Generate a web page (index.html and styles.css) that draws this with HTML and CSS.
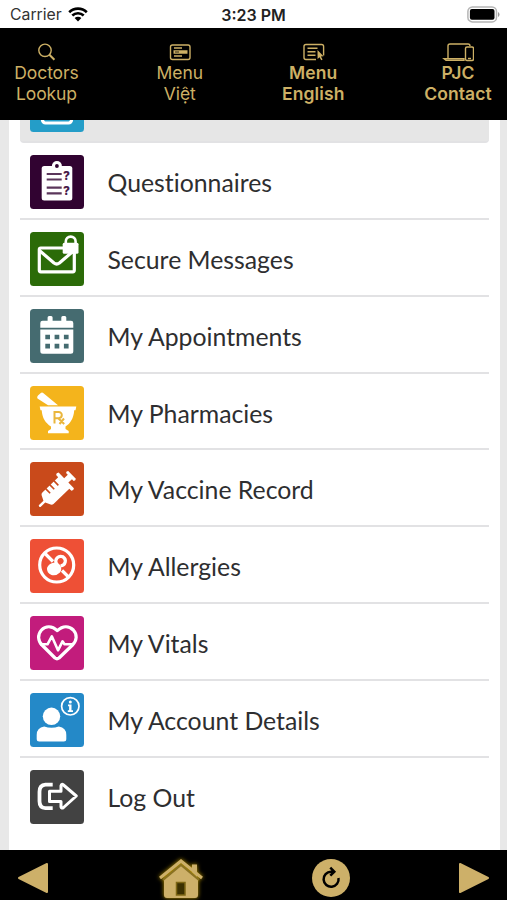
FILE: index.html
```
<!DOCTYPE html>
<html lang="en">
<head>
	<meta charset="UTF-8">
	<title>Patient Portal</title>
	<link rel="stylesheet" href="styles.css">
</head>
<body>
	<div id="app">
		<div class="status">
			<div class="carrier">
				<span>Carrier</span>
				<svg width="20" height="15" viewBox="0 0 20 15">
					<path d="M1.2 5.2a12.6 12.6 0 0 1 17.6 0M4.3 8.5a8.2 8.2 0 0 1 11.4 0" fill="none" stroke="#000" stroke-width="2.6"/>
					<path d="M6.6 11a4.9 4.9 0 0 1 6.8 0L10 14.5z"/>
				</svg>
			</div>
			<span class="time">3:23 PM</span>
			<svg class="battery" width="33" height="17" viewBox="0 0 33 17">
				<rect x=".9" y=".9" width="28.6" height="15" rx="4.5" fill="#fff" stroke="#b5b5b5" stroke-width="1.5"/>
				<rect x="2.9" y="3" width="24.6" height="10.8" rx="2"/>
				<path d="M31 6v5q1.5-.8 1.5-2.5T31 6z" fill="#999"/>
			</svg>
		</div>

		<nav class="top">
			<a class="doctors" href="#">
				<svg width="32" height="20" viewBox="0 0 32 20"><circle cx="14" cy="8.3" r="6.2"/><path d="M18.4 12.7l5 5" stroke-width="2"/></svg>
				Doctors<br>Lookup
			</a>
			<a class="viet" href="#">
				<svg width="32" height="20" viewBox="0 0 32 20"><rect x="6.5" y="3" width="19.5" height="14.5" rx="2"/><path d="M10 6h8M10 14h8"/><path d="M9.5 10h14" stroke-width="3.5"/><path d="M11 10h4" stroke="#000" stroke-width=".8"/></svg>
				Menu<br>Việt
			</a>
			<a class="english" href="#">
				<svg width="32" height="20" viewBox="0 0 32 20"><path d="M19 17.5H9a2 2 0 0 1-2-2V4.500a2 2 0 0 1 2-2h15.600a2 2 0 0 1 2 2v9M10.500 6.300h10M10.500 9.700h8M10.500 13.200h8"/><path d="M20.500 8l6 6.300-2.600.2 1.700 3-1.400.7-1.600-3-2 1.700z" class="solid"/></svg>
				Menu<br>English
			</a>
			<a class="contact" href="#">
				<svg width="32" height="20" viewBox="0 0 32 20"><path d="M6 16V4a2 2 0 0 1 2-2h18a2 2 0 0 1 2 2M2 16.700h20v1.700H4z"/><rect x="23.500" y="5" width="8" height="13.500" rx="1.500"/><path d="M26 16.500h3"/></svg>
				PJC<br>Contact
			</a>
		</nav>

		<main class="page">
			<ul class="menu">
				<li class="current">
					<svg class="tile" viewBox="0 0 54 54"><rect class="bg" width="54" height="54" rx="3.5"/><rect x="12.5" y="8" width="29" height="37" rx="3" class="line"/></svg>
				</li>
				<li>
					<svg class="tile questions" viewBox="0 0 54 54">
						<rect class="bg" width="54" height="54" rx="3.5"/>
						<rect x="11.7" y="11" width="30.6" height="34.5" rx="2.5"/>
						<circle cx="26.9" cy="11" r="5"/><circle class="bg" cx="26.9" cy="11" r="1.9"/>
						<path class="cut" d="M16.7 19h15M16.7 24.5h15M16.7 32.7h15M16.7 38.3h15"/>
						<text x="33" y="24.5">?</text><text x="33" y="39.5">?</text>
					</svg>
					<span>Questionnaires</span>
				</li>
				<li>
					<svg class="tile messages" viewBox="0 0 54 54">
						<rect class="bg" width="54" height="54" rx="3.5"/>
						<rect x="9.3" y="16" width="35" height="23.8" rx="1.5" class="line"/>
						<path d="M10 19l14 12q2.7 2 5.4 0l14-12" class="line"/>
						<rect x="32.7" y="10.7" width="15.8" height="11" rx="1.5"/>
						<path d="M35.8 12V9.500a4.900 4.900 0 0 1 9.800 0V12" class="line thin"/>
					</svg>
					<span>Secure Messages</span>
				</li>
				<li>
					<svg class="tile appointments" viewBox="0 0 54 54">
						<rect class="bg" width="54" height="54" rx="3.5"/>
						<path d="M10.300 18.800V14q0-2.300 2.300-2.300h5V8.500q0-1.500 1.500-1.500h2q1.500 0 1.500 1.500v3.200h8.700V8.500q0-1.500 1.500-1.500h2q1.500 0 1.500 1.500v3.200H41q2.300 0 2.300 2.300v4.800zM10.300 20.500h33v21.800q0 2.500-2.500 2.500H12.800q-2.500 0-2.500-2.500z"/>
						<path class="bg" d="M15.300 25.700H20v4.600h-4.700zM24.600 25.700h4.700v4.600h-4.700zM33.900 25.700h4.700v4.600h-4.700zM15.300 34.800H20v4.600h-4.700zM24.600 34.800h4.700v4.600h-4.700zM33.900 34.800h4.700v4.600h-4.700z"/>
					</svg>
					<span>My Appointments</span>
				</li>
				<li>
					<svg class="tile pharmacies" viewBox="0 0 54 54">
						<rect class="bg" width="54" height="54" rx="3.5"/>
						<path d="M7.500 12.500Q6.500 11 8 9.500l2.500-2.300q1.500-1.200 3 0L28 19.300H18zM9.700 20.500h36.600l-.8 3.700h-1.300c-.5 8-4 13.500-8.700 16.300v2.500l3.200 2v2.200H18V45l3-2v-2.500C15.500 37 12.200 32 11.700 24.200h-1.200z"/>
						<g class="rx"><path d="M24.500 37.500V26h4.200a3 3 0 0 1 0 6.200h-4M28 32l6.200 6M34 32.500l-4.500 5.500"/></g>
					</svg>
					<span>My Pharmacies</span>
				</li>
				<li>
					<svg class="tile vaccine" viewBox="0 0 54 54">
						<rect class="bg" width="54" height="54" rx="3.5"/>
						<g transform="translate(9.300 44.500) rotate(-44)">
							<path d="M.5-1.300H7l2.500-5.200q.8-1.500 2.500-1.500H34v-3q1.500-1.500 3.500 0v8h5V-5.500q1.500-1.400 3 0v11q-1.500 1.400-3 0V3h-5v8q-1.500 1.500-3.500 0V8H12q-1.700 0-2.500-1.500L7 1.300H.5q-1.500-1.300 0-2.600z"/>
							<path class="cut" d="M17-8.500v6.500M22.700-8.500v6.500M28.400-8.500v6.500"/>
						</g>
					</svg>
					<span>My Vaccine Record</span>
				</li>
				<li>
					<svg class="tile allergies" viewBox="0 0 54 54">
						<rect class="bg" width="54" height="54" rx="3.5"/>
						<circle cx="26.700" cy="26" r="17" class="line"/>
						<path d="M15 14.500l8 8M32 31.500l7 7" class="line"/>
						<path d="M22.500 24q5-1.500 7.500 2 2.500 4 0 7.500-3.500 3.500-8.500 2.500-5-2-4.500-7 1.500-4 5.500-5z"/>
						<path d="M26.500 25c-2.500-5 2-9 6.500-7.200 4 2.700 2.700 8.700-2.500 9.200" class="line"/>
					</svg>
					<span>My Allergies</span>
				</li>
				<li>
					<svg class="tile vitals" viewBox="0 0 54 54">
						<rect class="bg" width="54" height="54" rx="3.5"/>
						<path d="M27.300 14.600C22 9.500 15.500 9.700 11.500 14c-4.300 4.800-3.500 11 .5 15l13 13q2 1.500 4 0l13.500-13c4.500-4.500 5-10.500.8-15-4.300-4.300-10.500-4.300-16 .6z" class="line"/>
						<path d="M10 28.300h7.500l4.300-8 6.200 14 4.500-9 2 3h9" class="line thin"/>
					</svg>
					<span>My Vitals</span>
				</li>
				<li>
					<svg class="tile account" viewBox="0 0 54 54">
						<rect class="bg" width="54" height="54" rx="3.5"/>
						<circle cx="21.500" cy="23.300" r="8.700"/>
						<path d="M6.700 46v-4q0-7.500 7.500-8.500 7.300 2.500 14.600 0 7.500 1 7.500 8.500v4q0 2.500-2.500 2.500H9.200Q6.700 48.500 6.700 46z"/>
						<circle cx="40.300" cy="13.300" r="8.700" class="line ring"/>
						<circle cx="40.300" cy="9" r="1.500"/>
						<path d="M38 11.500h3.500v5.700H43V19h-5.200v-1.800h1.300v-4H38z"/>
					</svg>
					<span>My Account Details</span>
				</li>
				<li>
					<svg class="tile logout" viewBox="0 0 54 54">
						<rect class="bg" width="54" height="54" rx="3.5"/>
						<path d="M22.700 14.700H15.500q-6 .5-6 7v9.500q0 6.500 6 7h7.200" class="line out"/>
						<path d="M19.500 21.300h11.500v-5.600q.5-2.300 2.500-.7L46.300 26 33.500 37.500q-2 1.500-2.500-.7V31.500H19.500z" class="line"/>
					</svg>
					<span>Log Out</span>
				</li>
			</ul>
		</main>

		<footer class="bottom">
			<svg class="prev" width="32" height="32" viewBox="0 0 32 32"><path d="M2 16L30 2v28z"/></svg>
			<svg class="home" width="46" height="42" viewBox="0 0 46 42">
				<path d="M34 7.500h5V20l-5-5z"/>
				<path d="M6 22L23 8l17 14v16q0 3-3 3H9q-3 0-3-3z"/>
				<path class="shade" d="M5 23L23 8l18 15"/>
				<path class="roof" d="M2 21L23 4l21 17"/>
				<path class="door" d="M18.500 25.500h8.500V38h-8.500z"/>
			</svg>
			<svg class="reload" width="38" height="38" viewBox="0 0 38 38"><circle cx="19" cy="19" r="19"/><path d="M21.500 12.700H19A7.500 7.500 0 1 0 26.500 19M18.300 8.700l4 4-4 4" class="arrow"/></svg>
			<svg class="next" width="32" height="32" viewBox="0 0 32 32"><path d="M2 2l28 14-28 14z"/></svg>
		</footer>
	</div>
</body>
</html>
```
FILE: styles.css
```
body {
	margin: 0;
	background: #e8e8e8;
}
ul {
	padding: 0;
	margin: 0;
	list-style: none;
}
a {
	text-decoration: none;
}
svg {
	display: block;
}
#app {
	width: 507px;
	height: 900px;
	display: flex;
	flex-direction: column;
	overflow: hidden;
}

/* status bar */
.status {
	display: grid;
	grid-template-columns: 1fr auto 1fr;
	align-items: center;
	height: 28px;
	padding: 0 7px 0 10px;
	box-sizing: border-box;
	background: #fff;
	font: 15.8px/28px Inter, sans-serif;
	color: #333;
}
.carrier {
	display: flex;
	align-items: center;
	gap: 6px;
}
.carrier span {
	padding-top: 1px;
}
.time {
	margin-right: 3px;
	font-size: 16px;
	font-weight: 600;
	color: #222;
}
.battery {
	justify-self: end;
}

/* top navigation */
.top {
	display: flex;
	flex: none;
	height: 91.5px;
	padding-top: 14px;
	box-sizing: border-box;
	background: #000;
}
.top a {
	width: 133.5px;
	color: #cdb065;
	font: 17.5px/21.3px Inter, sans-serif;
	letter-spacing: -.1px;
	text-align: center;
	flex: none;
}
.top .doctors {
	width: 93px;
	margin-right: 20px;
}
.top .english,
.top .contact {
	font-weight: 600;
	letter-spacing: .1px;
}
.top .contact {
	width: 98px;
	margin-left: 29px;
}
.top svg {
	margin: 0 auto;
	fill: none;
	stroke: #cdb065;
	stroke-width: 1.4;
}
.top .solid {
	fill: #cdb065;
	stroke: none;
}

/* menu list */
.page {
	flex: 1;
	min-height: 0;
	margin: 0 7px 0 8.5px;
	padding: 0 11px 0 11.5px;
	background: #fff;
	overflow: hidden;
}
.menu li {
	display: flex;
	align-items: center;
	height: 76.8px;
	padding: 3px 0 0 10.4px;
	box-sizing: border-box;
	border-bottom: 2px solid #e2e2e4;
	font: 24.8px/30px Lato, sans-serif;
	font-variant-ligatures: none;
	color: #2e2e30;
}
.menu li:last-child {
	border-bottom-color: transparent;
}
.menu .current {
	margin-top: -53px;
	background: #e6e6e6;
	border-radius: 0 0 4px 4px;
}
.menu span {
	padding-top: 2px;
}
.tile {
	width: 54px;
	height: 54px;
	margin-right: 23.1px;
	flex: none;
	fill: #fff;
}
.tile .bg { fill: #249dc8; }
.questions .bg { fill: #310331; }
.messages .bg { fill: #2b6b08; }
.appointments .bg { fill: #456b70; }
.pharmacies .bg { fill: #f4b41c; }
.vaccine .bg { fill: #c94a1b; }
.allergies .bg { fill: #ee5036; }
.vitals .bg { fill: #c21c7c; }
.account .bg { fill: #2489c8; }
.logout .bg { fill: #424242; }
.tile .line {
	fill: none;
	stroke: #fff;
	stroke-width: 3.2;
	stroke-linejoin: round;
}
.tile .thin {
	stroke-width: 2.6;
}
.tile .ring {
	stroke-width: 1.7;
}
.logout .line {
	stroke-width: 3;
}
.logout .out {
	stroke-width: 3.8;
}
.questions .cut {
	stroke: #5b365b;
	stroke-width: 2.2;
}
.questions text {
	font: 800 12px Inter, sans-serif;
	fill: #4a1c4a;
}
.vaccine .cut {
	stroke: #c94a1b;
	stroke-width: 1.6;
}
.rx {
	fill: none;
	stroke: #eab63c;
	stroke-width: 2;
}

/* bottom toolbar */
.bottom {
	display: flex;
	flex: none;
	align-items: center;
	height: 50px;
	padding: 5px 17px 0;
	box-sizing: border-box;
	background: #000;
	fill: #cdb069;
}
.prev path,
.next path {
	stroke: #cdb069;
	stroke-width: 2;
	stroke-linejoin: round;
}
.home {
	margin: 0 108px 0 109px;
	overflow: visible;
	filter: drop-shadow(0 0 2px #c09a00);
}
.next {
	margin-left: auto;
}
.shade {
	fill: none;
	stroke: #8a7222;
	stroke-width: 2;
}
.roof {
	fill: none;
	stroke: #cdb069;
	stroke-width: 3;
}
.door {
	fill: #3b3000;
	stroke: #7c6514;
	stroke-width: 1.5;
}
.arrow {
	fill: none;
	stroke: #000;
	stroke-width: 2.5;
}
```
